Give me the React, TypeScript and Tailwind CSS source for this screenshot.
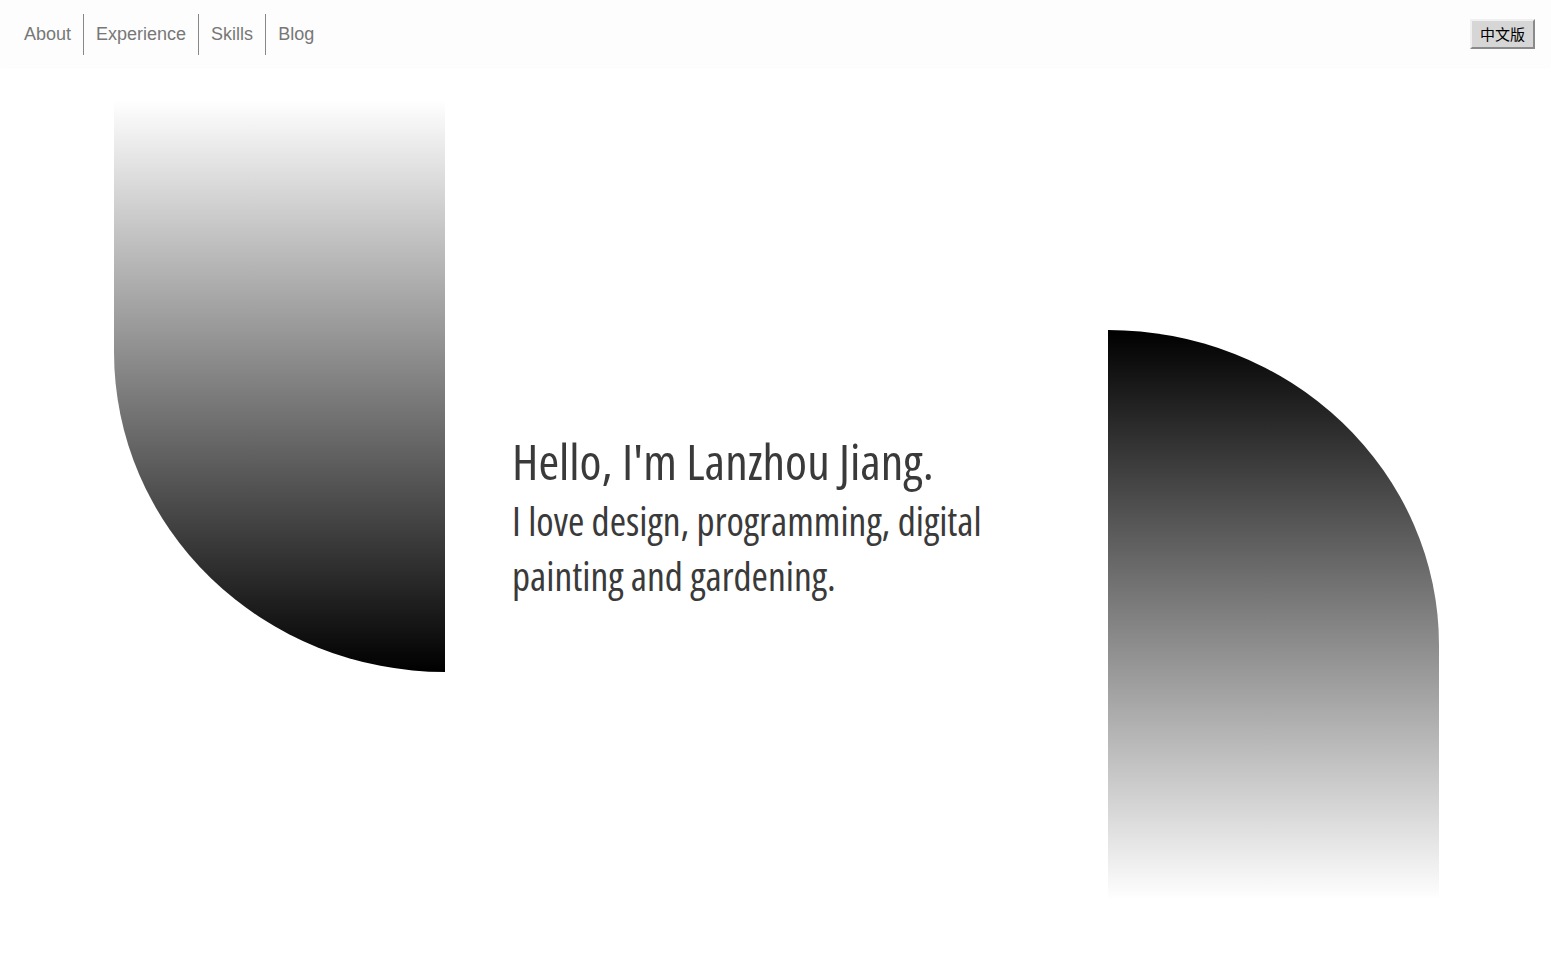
import React from 'react';

const navItems = ['About', 'Experience', 'Skills', 'Blog'];

export default function App() {
  return (
    <div className="min-h-screen bg-white">
      <header className="flex h-[67px] items-center justify-between bg-[#fdfdfd] pl-3 pr-4 shadow-[0_1px_3px_rgba(0,0,0,0.02)]">
        <nav className="flex pt-[1px]">
          {navItems.map((item, i) => (
            <a
              key={item}
              href="#"
              className={`flex h-[41px] items-center px-3 font-['Liberation_Sans',Arial,sans-serif] text-[18px] text-[#777] ${
                i > 0 ? 'border-l border-[#888]' : ''
              }`}
            >
              {item}
            </a>
          ))}
        </nav>
        <button className="flex h-[30px] w-[65px] items-center justify-center border-2 border-t-[#f0f0f0] border-l-[#f0f0f0] border-r-[#8a8a8a] border-b-[#8a8a8a] bg-[#d6d6d6] font-['Noto_Sans_CJK_SC',sans-serif] text-[15px] leading-none text-black">
          中文版
        </button>
      </header>

      <main className="flex h-[800px] gap-[67px] pl-[114px] pt-[33px]">
        <div className="h-[572px] w-[331px] shrink-0 self-start rounded-bl-[331px_320px] bg-[linear-gradient(to_bottom,#fff,#000)]" />
        <div className="mt-[328px] w-[529px] shrink-0 self-start font-['Open_Sans',sans-serif] font-normal text-[#3a3a3a] font-stretch-condensed">
          <h1 className="text-[50px] leading-[66px]">Hello, I'm Lanzhou Jiang.</h1>
          <p className="text-[39.5px] leading-[55px]">I love design, programming, digital painting and gardening.</p>
        </div>
        <div className="mt-[230px] h-[570px] w-[331px] shrink-0 rounded-tr-[331px_315px] bg-[linear-gradient(to_bottom,#000,#fff)]" />
      </main>
    </div>
  );
}
